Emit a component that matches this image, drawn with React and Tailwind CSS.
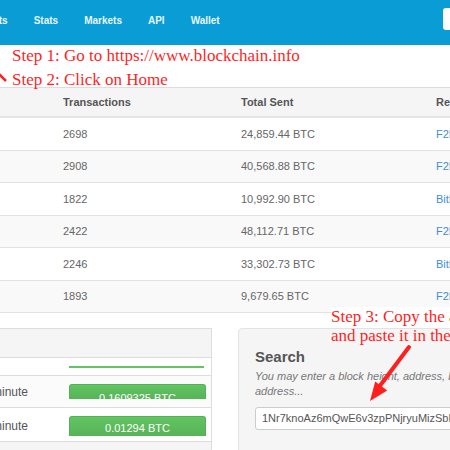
import React from 'react';

const navItems = ['Charts', 'Stats', 'Markets', 'API', 'Wallet'];

const blocks = [
  { tx: '2698', sent: '24,859.44 BTC', relay: 'F2Pool' },
  { tx: '2908', sent: '40,568.88 BTC', relay: 'F2Pool' },
  { tx: '1822', sent: '10,992.90 BTC', relay: 'BitFury' },
  { tx: '2422', sent: '48,112.71 BTC', relay: 'F2Pool' },
  { tx: '2246', sent: '33,302.73 BTC', relay: 'BitFury' },
  { tx: '1893', sent: '9,679.65 BTC', relay: 'F2Pool' },
];

const App = () => {
  return (
    <div className="relative w-[450px] h-[450px] overflow-hidden bg-white font-['Liberation_Sans',Arial,sans-serif]">
      {/* Navbar */}
      <div className="h-[45px] bg-[#0a9cd5] flex items-start relative">
        <div className="flex ml-[-37px] pt-[14px]">
          {navItems.map(item => (
            <span key={item} className="px-[13px] text-[10px] font-bold text-[#e8f6fc] leading-[14px]">
              {item}
            </span>
          ))}
        </div>
        <div className="absolute left-[443px] top-[8px] w-[60px] h-[22px] bg-white rounded-[3px]" />
      </div>

      {/* Spacer for annotations */}
      <div className="h-[42px]" />

      {/* Blocks table */}
      <div className="border-t border-[#dddddd] text-[11px]">
        <div className="grid grid-cols-[63px_178px_195px_1fr] h-[30px] items-center bg-[#f5f5f5] border-b-2 border-[#e4e4e4] font-bold text-[#555555]">
          <span />
          <span>Transactions</span>
          <span>Total Sent</span>
          <span className="whitespace-nowrap">Relayed By</span>
        </div>
        {blocks.map((b, i) => (
          <div
            key={i}
            className={`grid grid-cols-[63px_178px_195px_1fr] h-[32.5px] items-center border-b border-[#e2e2e2] text-[#666666] ${
              i % 2 === 1 ? 'bg-[#f9f9f9]' : 'bg-white'
            }`}
          >
            <span />
            <span>{b.tx}</span>
            <span>{b.sent}</span>
            <span className="text-[#3b8fd4] whitespace-nowrap">{b.relay}</span>
          </div>
        ))}
      </div>

      {/* Lower panels */}
      <div className="flex mt-[15px] gap-[26px]">
        <div className="w-[212px] shrink-0 border-t border-r border-[#dddddd] text-[12px] text-[#555555]">
          <div className="h-[29px] bg-[#f5f5f5] border-b border-[#dddddd]" />
          <div className="h-[18px] border-b border-[#dddddd] bg-white relative">
            <div className="absolute left-[69px] top-[8px] w-[135px] h-[2px] bg-[#62c462]" />
          </div>
          <div className="h-[32px] border-b border-[#dddddd] bg-[#fbfbfb] flex items-start">
            <span className="ml-[-8px] w-[77px] shrink-0 pt-[9px] leading-[14px]">minute</span>
            <div className="mt-[8px] w-[137px] h-[15px] overflow-hidden rounded-t-[3px] bg-gradient-to-b from-[#62c462] to-[#57b357] border-t border-x border-[#52b352]">
              <div className="text-center text-white text-[11px] pt-[7px] leading-[12px]">0.1609325 BTC</div>
            </div>
          </div>
          <div className="h-[34px] border-b border-[#dddddd] bg-white flex items-start">
            <span className="ml-[-8px] w-[77px] shrink-0 pt-[11px] leading-[14px]">minute</span>
            <div className="mt-[8px] w-[137px] h-[20px] overflow-hidden rounded-t-[3px] bg-gradient-to-b from-[#62c462] to-[#57b357] border-t border-x border-[#52b352]">
              <div className="text-center text-white text-[11px] pt-[5px] leading-[12px]">0.01294 BTC</div>
            </div>
          </div>
          <div className="h-[20px] bg-[#f5f5f5]" />
        </div>

        <div className="w-[260px] shrink-0 h-[140px] bg-[#f5f5f5] border border-[#e3e3e3] rounded-[4px] pl-[16px] pt-[19px]">
          <div className="text-[15px] font-bold text-[#555555] leading-[18px]">Search</div>
          <div className="text-[11px] italic text-[#777777] leading-[15px] mt-[3px] whitespace-nowrap">
            <div>You may enter a block height, address, block hash, transaction hash, hash160, or ipv4</div>
            <div>address...</div>
          </div>
          <div className="mt-[8px] h-[23px] bg-white border border-[#cccccc] rounded-[3px] flex items-center pl-[6px] text-[11px] text-[#555555] whitespace-nowrap overflow-hidden">
            1Nr7knoAz6mQwE6v3zpPNjryuMizSbE6
          </div>
        </div>
      </div>

      {/* Annotations overlay */}
      <div className="absolute left-[12px] top-[44px] font-['Liberation_Serif','Times_New_Roman',serif] text-[17px] leading-[24px] text-[#ff1f1f] whitespace-nowrap">
        <div>Step 1: Go to https://www.blockchain.info</div>
        <div>Step 2: Click on Home</div>
      </div>
      <div className="absolute left-[331px] top-[307px] font-['Liberation_Serif','Times_New_Roman',serif] text-[17px] leading-[19px] text-[#ff1f1f] whitespace-nowrap">
        <div className="bg-white pr-[4px]">Step 3: Copy the address</div>
        <div>and paste it in the search</div>
      </div>
      <svg className="absolute left-0 top-0 pointer-events-none" width="450" height="450">
        <line x1="-1" y1="74" x2="6" y2="81" stroke="#ff1f1f" strokeWidth="2.5" />
        <line x1="409" y1="347" x2="379" y2="387" stroke="#ff1f1f" strokeWidth="4" strokeLinecap="round" />
        <polygon points="370,401 375.2,381.4 387.2,390.4" fill="#ff1f1f" />
      </svg>
    </div>
  );
};

export default App;
